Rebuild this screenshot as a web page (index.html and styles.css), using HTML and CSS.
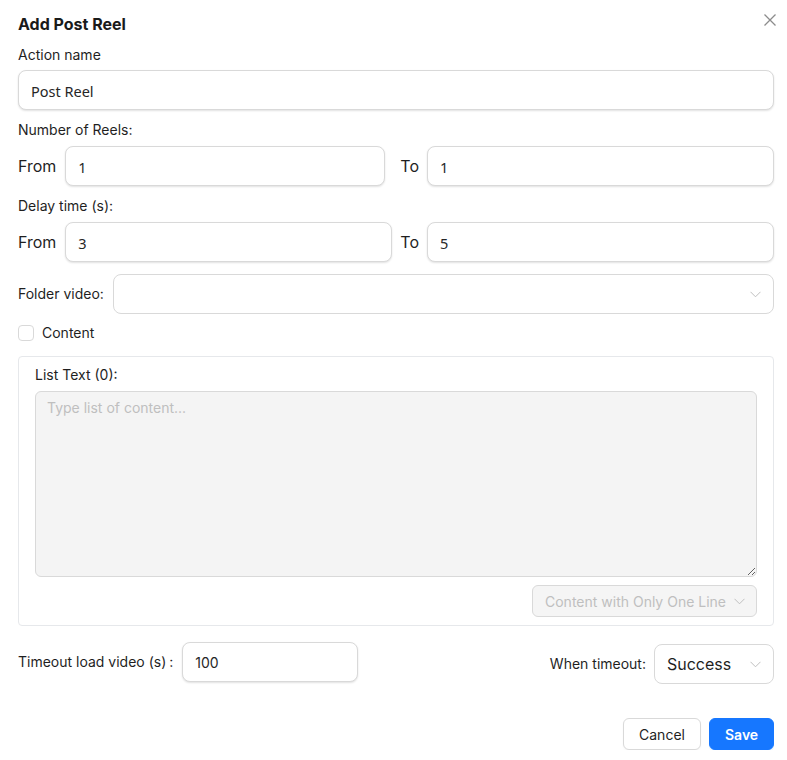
FILE: index.html
```html
<!DOCTYPE html>
<html lang="en">
<head>
<meta charset="utf-8">
<title>Add Post Reel</title>
<link rel="stylesheet" href="styles.css">
</head>
<body>
<div class="modal">
  <div class="header">
    <div class="title">Add Post Reel</div>
    <button class="close" aria-label="Close">
      <svg width="12" height="12" viewBox="0 0 12 12"><path d="M0.5 0.5 L11.5 11.5 M11.5 0.5 L0.5 11.5" stroke="#8c8c8c" stroke-width="1.3" fill="none"/></svg>
    </button>
  </div>

  <div class="label lbl-first">Action name</div>
  <div class="input field-full"><span class="val">Post Reel</span></div>

  <div class="label lbl-gap">Number of Reels:</div>
  <div class="range-row">
    <span class="range-label">From</span>
    <div class="input grow"><span class="val">1</span></div>
    <span class="range-label to to-wide">To</span>
    <div class="input right-input"><span class="val">1</span></div>
  </div>

  <div class="label lbl-gap">Delay time (s):</div>
  <div class="range-row">
    <span class="range-label">From</span>
    <div class="input grow"><span class="val">3</span></div>
    <span class="range-label to">To</span>
    <div class="input right-input"><span class="val">5</span></div>
  </div>

  <div class="folder-row">
    <span class="label inline">Folder video:</span>
    <div class="input select grow">
      <span class="val"></span>
      <svg class="chev" width="11" height="7" viewBox="0 0 11 7"><path d="M0.5 0.8 L5.5 5.8 L10.5 0.8" stroke="#bfbfbf" stroke-width="1" fill="none"/></svg>
    </div>
  </div>

  <div class="check-row">
    <span class="checkbox"></span>
    <span class="label inline">Content</span>
  </div>

  <div class="panel">
    <div class="label panel-label">List Text (0):</div>
    <textarea class="textarea" placeholder="Type list of content..."></textarea>
    <div class="panel-foot">
      <div class="dis-select">
        <span>Content with Only One Line</span>
        <svg width="11" height="7" viewBox="0 0 11 7"><path d="M0.5 0.8 L5.5 5.8 L10.5 0.8" stroke="#bfbfbf" stroke-width="1" fill="none"/></svg>
      </div>
    </div>
  </div>

  <div class="timeout-row">
    <div class="timeout-left">
      <span class="label inline">Timeout load video (s)<span class="colon">:</span></span>
      <div class="input timeout-input"><span class="val inter">100</span></div>
    </div>
    <div class="timeout-right">
      <span class="label inline">When timeout:</span>
      <div class="input select success">
        <span class="val big">Success</span>
        <svg class="chev" width="11" height="7" viewBox="0 0 11 7"><path d="M0.5 0.8 L5.5 5.8 L10.5 0.8" stroke="#bfbfbf" stroke-width="1" fill="none"/></svg>
      </div>
    </div>
  </div>

  <div class="footer">
    <button class="btn cancel">Cancel</button>
    <button class="btn save">Save</button>
  </div>
</div>
</body>
</html>
```
FILE: styles.css
```css
* { box-sizing: border-box; }
html, body { margin: 0; padding: 0; background: #ffffff; }
body {
  font-family: Inter, "Noto Sans", sans-serif;
  color: #1f1f1f;
  font-size: 14px;
}
.modal {
  width: 787px;
  padding: 12px 13px 0 18px;
  display: flex;
  flex-direction: column;
}
.header {
  display: flex;
  justify-content: space-between;
  align-items: flex-start;
}
.title {
  font-size: 16px;
  font-weight: 700;
  line-height: 24px;
  color: #1a1a1a;
}
.close {
  border: 0;
  background: none;
  padding: 0;
  margin-top: 2px;
  margin-right: -2px;
  width: 12px;
  height: 12px;
  display: flex;
}
.label {
  font-size: 14px;
  line-height: 22px;
  color: #1f1f1f;
}
.label.inline { white-space: nowrap; }
.lbl-first { margin-top: 8px; margin-bottom: 4px; }
.lbl-gap { margin-top: 9px; margin-bottom: 5px; }
.colon { margin-left: 3px; }

.input {
  height: 40px;
  border: 1px solid #d9d9d9;
  border-radius: 8px;
  background: #fff;
  box-shadow: 0 1px 2px rgba(0, 0, 0, 0.12);
  display: flex;
  align-items: center;
  padding: 0 12px;
}
.val {
  font-family: "Noto Sans", "Open Sans", sans-serif;
  font-size: 14.5px;
  color: #262626;
  padding-top: 1px;
}
.val.inter { font-family: Inter, sans-serif; font-size: 14px; }
.val.big { font-family: Inter, sans-serif; font-size: 16px; color: #1f1f1f; padding-top: 0; }
.field-full { width: 756px; }

.range-row {
  display: flex;
  align-items: center;
  width: 756px;
}
.range-label {
  font-size: 16px;
  line-height: 24px;
  color: #1f1f1f;
  margin-right: 9px;
}
.range-label.to { margin-left: 8px; margin-right: 8px; }
.range-label.to.to-wide { margin-left: 15px; }
.grow { flex: 1; min-width: 0; }
.right-input { width: 347px; }

.folder-row {
  display: flex;
  align-items: center;
  gap: 9px;
  width: 756px;
  margin-top: 12px;
}
.select { justify-content: space-between; box-shadow: none; padding-right: 12px; }
.chev { flex: none; }

.check-row {
  display: flex;
  align-items: center;
  gap: 8px;
  margin-top: 8px;
}
.checkbox {
  width: 16px;
  height: 16px;
  border: 1px solid #d9d9d9;
  border-radius: 4px;
  background: #fff;
}

.panel {
  width: 756px;
  margin-top: 12px;
  border: 1px solid #e6e8eb;
  border-radius: 4px;
  padding: 8px 16px 8px 16px;
  display: flex;
  flex-direction: column;
}
.panel-label { line-height: 20px; margin-bottom: 6px; }
.textarea {
  width: 100%;
  height: 186px;
  background: #f4f4f4;
  border: 1px solid #d9d9d9;
  border-radius: 6px;
  padding: 7px 11px;
  font-family: Inter, sans-serif;
  font-size: 14px;
  color: #262626;
  resize: vertical;
  outline: none;
  margin: 0;
  display: block;
}
.textarea::placeholder { color: #bfbfbf; }
.panel-foot {
  display: flex;
  justify-content: flex-end;
  margin-top: 8px;
}
.dis-select {
  width: 225px;
  height: 32px;
  border: 1px solid #d9d9d9;
  border-radius: 6px;
  background: #f5f5f5;
  display: flex;
  align-items: center;
  justify-content: space-between;
  padding: 0 11px 0 12px;
  color: #bfbfbf;
  font-size: 14px;
}

.timeout-row {
  width: 756px;
  margin-top: 16px;
  display: flex;
  justify-content: space-between;
  align-items: flex-start;
}
.timeout-left {
  display: flex;
  align-items: center;
  gap: 9px;
}
.timeout-input { width: 176px; }
.timeout-right {
  display: flex;
  align-items: center;
  gap: 8px;
  margin-top: 2px;
}
.success { width: 120px; padding-left: 12px; }

.footer {
  width: 756px;
  display: flex;
  justify-content: flex-end;
  gap: 8px;
  margin-top: 34px;
}
.btn {
  height: 32px;
  border-radius: 6px;
  font-family: Inter, sans-serif;
  font-size: 14px;
  padding: 0 15px;
  cursor: pointer;
}
.cancel {
  width: 78px;
  background: #fff;
  border: 1px solid #d9d9d9;
  color: #1f1f1f;
  box-shadow: 0 1px 2px rgba(0, 0, 0, 0.04);
}
.save {
  width: 65px;
  background: #1677ff;
  border: 1px solid #1677ff;
  color: #fff;
  font-weight: 600;
  box-shadow: 0 2px 0 rgba(5, 145, 255, 0.1);
}
```
